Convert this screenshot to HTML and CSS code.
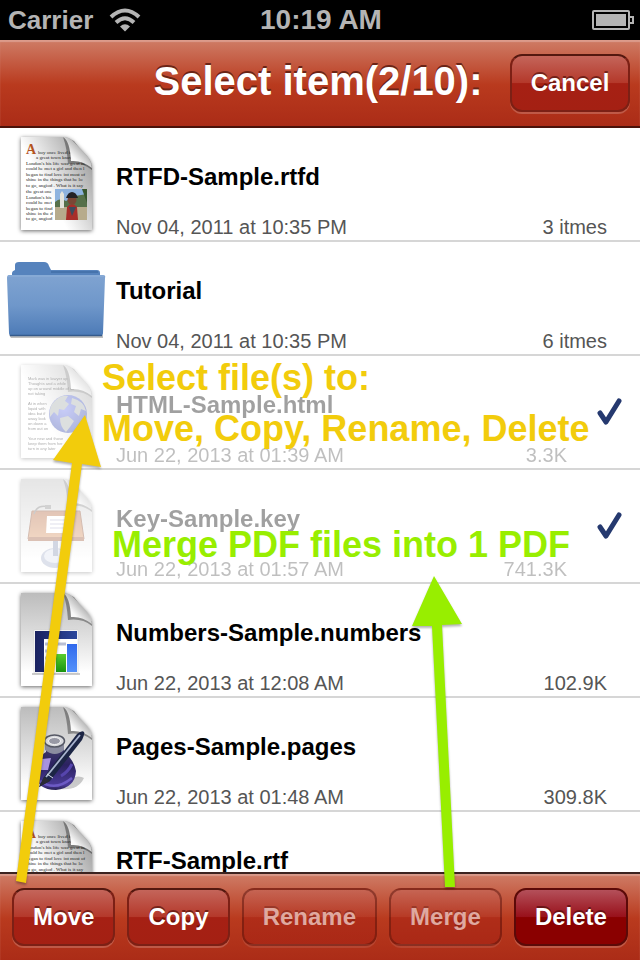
FILE: index.html
```html
<!DOCTYPE html>
<html lang="en">
<head>
    <meta charset="UTF-8">
    <meta name="viewport" content="width=device-width, initial-scale=1.0">
    <title>Select item</title>
    <link rel="stylesheet" href="styles.css">
</head>
<body>
    <!-- shared gradients and page shape -->
    <svg class="defs" aria-hidden="true">
        <defs>
            <linearGradient id="paper" x1="0" y1="0" x2="0" y2="1">
                <stop offset="0" stop-color="#bcbcbc"/>
                <stop offset="0.45" stop-color="#dedede"/>
                <stop offset="0.85" stop-color="#ffffff"/>
            </linearGradient>
            <linearGradient id="paperText" x1="1" y1="0" x2="0.3" y2="0.5">
                <stop offset="0" stop-color="#8c8c8c"/>
                <stop offset="1" stop-color="#ffffff"/>
            </linearGradient>
            <linearGradient id="curl" x1="0" y1="1" x2="0.7" y2="0.3">
                <stop offset="0" stop-color="#ffffff"/>
                <stop offset="0.5" stop-color="#f8f8f8"/>
                <stop offset="1" stop-color="#a4a4a4"/>
            </linearGradient>
            <linearGradient id="folderFront" x1="0" y1="0" x2="0" y2="1">
                <stop offset="0" stop-color="#7fa3d1"/>
                <stop offset="0.5" stop-color="#6f97ca"/>
                <stop offset="1" stop-color="#4c7ab6"/>
            </linearGradient>
            <linearGradient id="navy" x1="0" y1="0" x2="1" y2="0">
                <stop offset="0" stop-color="#1a2260"/>
                <stop offset="1" stop-color="#2c479c"/>
            </linearGradient>
            <linearGradient id="greenBar" x1="0" y1="0" x2="0" y2="1">
                <stop offset="0" stop-color="#59cc2d"/>
                <stop offset="1" stop-color="#1a9410"/>
            </linearGradient>
            <linearGradient id="blueBar" x1="0" y1="0" x2="0" y2="1">
                <stop offset="0" stop-color="#3169ec"/>
                <stop offset="1" stop-color="#5592fa"/>
            </linearGradient>
            <linearGradient id="wood" x1="0" y1="0" x2="0" y2="1">
                <stop offset="0" stop-color="#b2633c"/>
                <stop offset="1" stop-color="#d9935e"/>
            </linearGradient>
            <linearGradient id="ink" x1="0" y1="0" x2="0" y2="1">
                <stop offset="0" stop-color="#4a4670"/>
                <stop offset="0.5" stop-color="#2b2260"/>
                <stop offset="0.9" stop-color="#4b3b98"/>
                <stop offset="1" stop-color="#262050"/>
            </linearGradient>
            <radialGradient id="globe" cx="0.4" cy="0.35" r="0.65">
                <stop offset="0" stop-color="#6c78f0"/>
                <stop offset="1" stop-color="#2a3fa4"/>
            </radialGradient>
            <g id="sheet">
                <path d="M21 9H63Q69 9 74 14L87 28Q92 34 92 39V102H21Z"/>
            </g>
            <g id="fold">
                <path d="M63 9Q67 20 68 36Q82 34 92 42V38L74 13Z" fill="#000" opacity="0.35"/>
                <path d="M63 9Q70 13 71 33Q82 32 92 40Q91 33 87 28L74 14Q69 9 63 9Z" fill="url(#curl)"/>
            </g>
            <g id="story">
                <text class="print cap" x="26" y="26">A</text>
                <text class="print" x="38" y="26">boy once lived in</text>
                <text class="print" x="36" y="31">a great town know</text>
                <text class="print" x="26" y="37">London's his life was great he</text>
                <text class="print" x="26" y="42">could he met a girl and then l</text>
                <text class="print" x="26" y="48">began to find love int most of</text>
                <text class="print" x="26" y="53">shine in the things that he lo</text>
                <text class="print" x="26" y="59">to go, angiod . What is it say</text>
            </g>
        </defs>
    </svg>

    <div class="status">
        <div class="carrier">
            <span>Carrier</span>
            <svg class="wifi" viewBox="0 0 32 24" aria-label="Wi-Fi">
                <path d="M2 9Q16 -4 30 9M7 14.500Q16 6 25 14.500" fill="none" stroke="#b4b4b4" stroke-width="4"/>
                <path d="M11 18.500Q16 14 21 18.500L16 23.500Z" fill="#b4b4b4"/>
            </svg>
        </div>
        <div class="clock">10:19 AM</div>
        <svg class="battery" viewBox="0 0 42 20" aria-label="Battery">
            <rect x="1" y="1" width="36" height="18" rx="1" fill="none" stroke="#b4b4b4" stroke-width="2"/>
            <rect x="4" y="4" width="30" height="12" fill="#b4b4b4"/>
            <path d="M38 7H41V13H38" fill="none" stroke="#b4b4b4" stroke-width="2"/>
        </svg>
    </div>

    <header class="bar navbar">
        <h1>Select item(2/10):</h1>
        <button type="button" class="btn">Cancel</button>
    </header>

    <ul class="files">
        <li>
            <label class="row">
                <svg class="icon" viewBox="0 0 116 112" aria-hidden="true">
                    <g class="sheet text-sheet"><use href="#sheet"/></g>
                    <use href="#story"/>
                    <use href="#fold"/>
                    <text class="print" x="26" y="65">the great one</text>
                    <text class="print" x="26" y="71">London's his</text>
                    <text class="print" x="26" y="76">could he met</text>
                    <text class="print" x="26" y="82">began to find</text>
                    <text class="print" x="26" y="87">shine in the d</text>
                    <text class="print" x="26" y="92">to go, angiod</text>
                    <rect x="55" y="61" width="32" height="31" fill="#8eb3df"/>
                    <path d="M55 74Q60 69 66 73L75 68L87 66V81H55Z" fill="#56704a"/>
                    <rect x="55" y="79" width="32" height="13" fill="#b7ab8c"/>
                    <path d="M62 63L64 66V80H60V66Z" fill="#e4e4dc"/>
                    <path d="M66 92L67 79Q72 73 77 79L78 92Z" fill="#a82e2a"/>
                    <path d="M69 79L72 88L76 79Z" fill="#3e4a5c"/>
                    <circle cx="72" cy="72" r="4.500" fill="#7a4735"/>
                    <path d="M66 70Q68 64 72 64Q76 64 78 70Z" fill="#242326"/>
                    <path d="M82 61L87 61V75Z" fill="#38562f"/>
                </svg>
                <span class="info">
                    <span class="name">RTFD-Sample.rtfd</span>
                    <span class="meta"><span>Nov 04, 2011 at 10:35 PM</span><span>3 itmes</span></span>
                </span>
                <input type="checkbox">
            </label>
        </li>
        <li>
            <label class="row">
                <svg class="icon" viewBox="0 0 116 112" aria-hidden="true">
                    <path d="M9 93H103V96H11Z" fill="#000" opacity="0.25"/>
                    <path d="M12 34V31Q12 29 15 28V23Q15 20 19 20H44Q48 20 49 24L51 28H97Q100 28 100 31V34Z" fill="#5683bd"/>
                    <path d="M51 29H98V31H51Z" fill="#4673ac"/>
                    <path d="M9 33H103Q106 33 105 36L103 91Q103 94 100 94H12Q9 94 9 91L7 36Q7 33 9 33Z" fill="url(#folderFront)"/>
                    <path d="M8 34H104" stroke="#8fb0da" stroke-width="1"/>
                    <path d="M10 93.500H102" stroke="#365b8c" stroke-width="1.500"/>
                </svg>
                <span class="info">
                    <span class="name">Tutorial</span>
                    <span class="meta"><span>Nov 04, 2011 at 10:35 PM</span><span>6 itmes</span></span>
                </span>
                <input type="checkbox">
            </label>
        </li>
        <li>
            <label class="row">
                <svg class="icon" viewBox="0 0 116 112" aria-hidden="true">
                    <g class="sheet text-sheet"><use href="#sheet"/></g>
                    <g class="sans">
                        <text class="print" x="28" y="24">Mark was in lawyer up</text>
                        <text class="print" x="28" y="29">Thoughts and a while</text>
                        <text class="print" x="28" y="34">up on around middle of all</text>
                        <text class="print" x="28" y="39">not taking</text>
                        <text class="print" x="28" y="49">At in when</text>
                        <text class="print" x="28" y="54">liquid with</text>
                        <text class="print" x="28" y="59">idea but if</text>
                        <text class="print" x="28" y="64">away look</text>
                        <text class="print" x="28" y="69">on down a</text>
                        <text class="print" x="28" y="74">from out on</text>
                        <text class="print" x="28" y="84">Your new and those</text>
                        <text class="print" x="28" y="89">keep them from her</text>
                        <text class="print" x="28" y="94">turn in any later</text>
                    </g>
                    <use href="#fold"/>
                    <circle cx="68" cy="58" r="19" fill="url(#globe)"/>
                    <path d="M52 48Q60 38 68 40L65 45L69 48L64 54L59 53L58 60L54 56L50 61Q49 53 52 48ZM60 62L68 60L74 65L70 71L66 76Q60 71 60 62ZM72 42Q84 45 86 55L81 53L79 60L74 56L76 50L71 48Z" fill="#a3aaaa"/>
                </svg>
                <span class="info">
                    <span class="name">HTML-Sample.html</span>
                    <span class="meta"><span>Jun 22, 2013 at 01:39 AM</span><span>3.3K</span></span>
                </span>
                <input type="checkbox" checked>
                <svg class="tick" viewBox="0 0 25 28" aria-hidden="true">
                    <path d="M3 15L9 24L22 3"/>
                </svg>
            </label>
        </li>
        <li>
            <label class="row">
                <svg class="icon" viewBox="0 0 116 112" aria-hidden="true">
                    <g class="sheet"><use href="#sheet"/></g>
                    <use href="#fold"/>
                    <ellipse cx="55" cy="88" rx="14" ry="10" fill="#a8b2cc"/>
                    <ellipse cx="55" cy="86" rx="11" ry="7" fill="#dde3f0"/>
                    <rect x="53" y="65" width="5" height="21" fill="#8794b4"/>
                    <path d="M32 41H80L84 69H28Z" fill="url(#wood)" stroke="#8c4d2f"/>
                    <path d="M28 67H84V71H28Z" fill="#a05a38"/>
                    <path d="M47 46H68V63H46Z" fill="#fff"/>
                    <path d="M50 50H65M50 54H65M50 58H65" stroke="#aac" stroke-width="1"/>
                    <path d="M34 44Q37 34 49 37" fill="none" stroke="#777" stroke-width="1.500"/>
                    <rect x="45" y="35" width="6" height="4" fill="#888"/>
                </svg>
                <span class="info">
                    <span class="name">Key-Sample.key</span>
                    <span class="meta"><span>Jun 22, 2013 at 01:57 AM</span><span>741.3K</span></span>
                </span>
                <input type="checkbox" checked>
                <svg class="tick" viewBox="0 0 25 28" aria-hidden="true">
                    <path d="M3 15L9 24L22 3"/>
                </svg>
            </label>
        </li>
        <li>
            <label class="row">
                <svg class="icon" viewBox="0 0 116 112" aria-hidden="true">
                    <g class="sheet"><use href="#sheet"/></g>
                    <use href="#fold"/>
                    <path d="M34 46H78V89H34Z" fill="#fff" stroke="#ccc" stroke-width="0.500"/>
                    <path d="M35 47H77V55H44V88H35Z" fill="url(#navy)"/>
                    <path d="M45 60H66M45 67H55M45 74H55M45 81H55" stroke="#b9bfd4" stroke-width="3"/>
                    <rect x="56" y="70" width="10" height="18" fill="url(#greenBar)"/>
                    <rect x="67" y="60" width="10" height="28" fill="url(#blueBar)"/>
                    <path d="M32 90H80" stroke="#999" stroke-width="1"/>
                </svg>
                <span class="info">
                    <span class="name">Numbers-Sample.numbers</span>
                    <span class="meta"><span>Jun 22, 2013 at 12:08 AM</span><span>102.9K</span></span>
                </span>
                <input type="checkbox">
            </label>
        </li>
        <li>
            <label class="row">
                <svg class="icon" viewBox="0 0 116 112" aria-hidden="true">
                    <g class="sheet"><use href="#sheet"/></g>
                    <use href="#fold"/>
                    <path d="M60 91Q78 93 84 80Q80 77 70 80Z" fill="#000" opacity="0.2"/>
                    <path d="M46 42V54Q35 60 34 75Q37 92 56 92Q75 90 76 73Q74 62 64 54V42Z" fill="url(#ink)"/>
                    <path d="M45 52Q55 60 64 52V42H45Z" fill="#8b8da0"/>
                    <ellipse cx="54.500" cy="43" rx="10" ry="6" fill="#d9dade" stroke="#555864" stroke-width="1.500"/>
                    <ellipse cx="54.500" cy="43" rx="6" ry="3.500" fill="#9899a5" stroke="#f5f5f5"/>
                    <path d="M42 61L51 60L48 72L40 72Z" fill="#a793e0"/>
                    <path d="M40 83Q55 94 72 80" fill="none" stroke="#6c5ac4" stroke-width="2.500"/>
                    <path d="M61 78Q68 74 72 66" fill="none" stroke="#5645ad" stroke-width="3"/>
                    <path d="M39 89L44 79L77 36Q82 32 84 34Q85 36 82 42L50 83Z" fill="#1c2544"/>
                    <path d="M46 79L80 37" stroke="#a9b4cf" stroke-width="1.800"/>
                    <path d="M39 89L44 79L50 83Z" fill="#2b2b34"/>
                    <path d="M47 76L53 80" stroke="#d8dce8" stroke-width="1"/>
                </svg>
                <span class="info">
                    <span class="name">Pages-Sample.pages</span>
                    <span class="meta"><span>Jun 22, 2013 at 01:48 AM</span><span>309.8K</span></span>
                </span>
                <input type="checkbox">
            </label>
        </li>
        <li>
            <label class="row">
                <svg class="icon" viewBox="0 0 116 112" aria-hidden="true">
                    <g class="sheet text-sheet"><use href="#sheet"/></g>
                    <use href="#story"/>
                    <use href="#fold"/>
                </svg>
                <span class="info">
                    <span class="name">RTF-Sample.rtf</span>
                </span>
                <input type="checkbox">
            </label>
        </li>
    </ul>

    <footer class="bar toolbar">
        <button type="button" class="btn">Move</button>
        <button type="button" class="btn">Copy</button>
        <button type="button" class="btn" disabled>Rename</button>
        <button type="button" class="btn" disabled>Merge</button>
        <button type="button" class="btn danger">Delete</button>
    </footer>

    <!-- help notes drawn over the list -->
    <svg class="notes">
        <g class="yellow">
            <path d="M85 415L101 467L82 464L26 883L16 881L72 463L53 460Z"/>
            <text x="102" y="390">Select file(s) to:</text>
            <text x="102" y="441">Move, Copy, Rename, Delete</text>
        </g>
        <g class="green">
            <path d="M434 576L462 624L442 625L455 887L445 887L432 626L412 626Z"/>
            <text x="112" y="557">Merge PDF files into 1 PDF</text>
        </g>
    </svg>
</body>
</html>
```

FILE: styles.css
```css
* { box-sizing: border-box; }
body { margin: 0; height: 100vh; display: flex; flex-direction: column; overflow: hidden; position: relative; background: #fff; font-family: "Liberation Sans", Arial, Helvetica, sans-serif; }
.defs { position: absolute; width: 0; height: 0; }

/* status bar */
.status { flex: none; height: 40px; padding: 0 6px 0 8px; display: grid; grid-template-columns: 1fr auto 1fr; align-items: center; background: #000; color: #b4b4b4; font-weight: bold; }
.carrier { display: flex; align-items: center; gap: 16px; font-size: 26px; }
.wifi { width: 32px; height: 24px; }
.clock { font-size: 28px; }
.battery { width: 42px; height: 20px; justify-self: end; }

/* red bars */
.bar { flex: none; background: linear-gradient(#cf7c66, #b93a1e 52%, #ab2c17); }
.navbar { display: grid; grid-template-columns: 1fr auto 1fr; align-items: center; padding: 14px 10px; border-bottom: 2px solid #4a120a; box-shadow: inset 0 2px 1px #dc9b8b; }
.navbar h1 { grid-column: 2; margin: 0; padding: 0 4px 4px 0; font-size: 40px; line-height: 44px; color: #fff; text-shadow: 0 -2px 0 #6b2416; white-space: nowrap; }
.navbar .btn { justify-self: end; width: 120px; padding: 0; }
.toolbar { display: flex; gap: 12px; padding: 14px 12px; border-top: 2px solid #3c2320; box-shadow: inset 0 2px 1px #d99a8a; }
.toolbar .btn { flex: 1 1 auto; padding: 0; }

.btn { height: 58px; border: 2px solid #7c2015; border-top-color: #54180f; border-radius: 12px; background: linear-gradient(#c4655a, #b4382a 50%, #a62014 51%, #a42013); box-shadow: 0 2px 0 rgba(255, 255, 255, 0.2); color: #fff; font-family: inherit; font-size: 24px; font-weight: bold; text-shadow: 0 -2px 0 rgba(70, 10, 5, 0.6); cursor: pointer; }
.btn:disabled { border-color: rgba(90, 20, 10, 0.5); background: linear-gradient(rgba(196, 101, 90, 0.5), rgba(180, 56, 42, 0.5) 50%, rgba(166, 32, 20, 0.5) 51%, rgba(164, 32, 19, 0.5)); box-shadow: 0 2px 0 rgba(255, 255, 255, 0.1); color: #dfa9a0; text-shadow: 0 -2px 0 rgba(70, 10, 5, 0.3); cursor: default; }
.btn.danger { background: linear-gradient(#b4505a, #98101a 50%, #8a0000 51%, #8a0000); border-color: #5c0a08; }

/* file list */
.files { flex: 1; min-height: 0; margin: 0; padding: 0; list-style: none; overflow: hidden; }
.files li { border-bottom: 2px solid #d6d6d6; }
.row { display: flex; align-items: center; height: 112px; padding-right: 33px; }
.icon { flex: none; width: 116px; height: 112px; }
.info { flex: 1; align-self: flex-start; padding-top: 35px; }
.name { display: block; font-size: 24px; line-height: 28px; font-weight: bold; color: #000; }
.meta { display: flex; justify-content: space-between; margin-top: 24px; font-size: 20px; line-height: 24px; color: #555; }
.row input { appearance: none; width: 0; height: 0; margin: 0; }
.row:has(input:checked) { padding-right: 18px; }
.row:has(input:checked) .icon, .row:has(input:checked) .info { opacity: 0.37; }
.tick { flex: none; width: 25px; height: 28px; margin-left: 30px; }
.tick path { fill: none; stroke: #25396f; stroke-width: 5; stroke-linecap: round; stroke-linejoin: round; }

.sheet { fill: url(#paper); filter: drop-shadow(0 1px 2px rgba(0, 0, 0, 0.6)); }
.text-sheet { fill: url(#paperText); }
.print { font-family: "Liberation Serif", serif; font-size: 5px; fill: #222; }
.sans .print { font-family: "Liberation Sans", sans-serif; font-size: 4px; }
.print.cap { font-size: 14px; font-weight: bold; fill: #b4551e; }

/* help notes */
.notes { position: absolute; top: 0; left: 0; width: 100%; height: 100%; pointer-events: none; }
.notes text { font-size: 36px; font-weight: bold; }
.notes path { filter: drop-shadow(0 2px 1px rgba(0, 0, 0, 0.3)); }
.yellow { fill: #f2cc0c; }
.green { fill: #98ee00; }
```
